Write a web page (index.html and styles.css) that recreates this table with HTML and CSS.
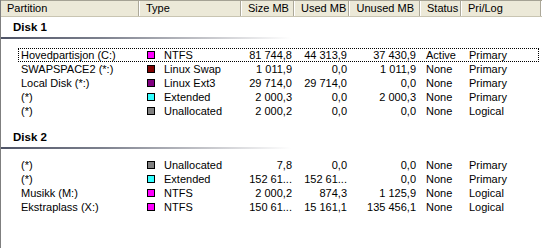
FILE: index.html
```html
<!DOCTYPE html>
<html>
<head>
<meta charset="utf-8">
<link rel="stylesheet" href="styles.css">
</head>
<body>
<div class="view">
  <div class="header">
    <div class="hc first">Partition</div>
    <div class="hc">Type</div>
    <div class="hc num">Size MB</div>
    <div class="hc num">Used MB</div>
    <div class="hc num">Unused MB</div>
    <div class="hc">Status</div>
    <div class="hc">Pri/Log</div>
    <div class="hc rest"></div>
  </div>

  <div class="group">
    <div class="gtitle">Disk 1</div>
    <div class="gline"></div>
    <div class="rows">
      <div class="row focus">
        <div class="c">Hovedpartisjon (C:)</div>
        <div class="c type"><span class="sw ntfs"></span>NTFS</div>
        <div class="c num">81 744,8</div>
        <div class="c num">44 313,9</div>
        <div class="c num u">37 430,9</div>
        <div class="c st">Active</div>
        <div class="c pl">Primary</div>
      </div>
      <div class="row">
        <div class="c">SWAPSPACE2 (*:)</div>
        <div class="c type"><span class="sw swap"></span>Linux Swap</div>
        <div class="c num">1 011,9</div>
        <div class="c num">0,0</div>
        <div class="c num u">1 011,9</div>
        <div class="c st">None</div>
        <div class="c pl">Primary</div>
      </div>
      <div class="row">
        <div class="c">Local Disk (*:)</div>
        <div class="c type"><span class="sw ext3"></span>Linux Ext3</div>
        <div class="c num">29 714,0</div>
        <div class="c num">29 714,0</div>
        <div class="c num u">0,0</div>
        <div class="c st">None</div>
        <div class="c pl">Primary</div>
      </div>
      <div class="row">
        <div class="c">(*)</div>
        <div class="c type"><span class="sw ext"></span>Extended</div>
        <div class="c num">2 000,3</div>
        <div class="c num">0,0</div>
        <div class="c num u">2 000,3</div>
        <div class="c st">None</div>
        <div class="c pl">Primary</div>
      </div>
      <div class="row">
        <div class="c">(*)</div>
        <div class="c type"><span class="sw unal"></span>Unallocated</div>
        <div class="c num">2 000,2</div>
        <div class="c num">0,0</div>
        <div class="c num u">0,0</div>
        <div class="c st">None</div>
        <div class="c pl">Logical</div>
      </div>
    </div>
  </div>

  <div class="group g2">
    <div class="gtitle">Disk 2</div>
    <div class="gline"></div>
    <div class="rows">
      <div class="row">
        <div class="c">(*)</div>
        <div class="c type"><span class="sw unal"></span>Unallocated</div>
        <div class="c num">7,8</div>
        <div class="c num">0,0</div>
        <div class="c num u">0,0</div>
        <div class="c st">None</div>
        <div class="c pl">Primary</div>
      </div>
      <div class="row">
        <div class="c">(*)</div>
        <div class="c type"><span class="sw ext"></span>Extended</div>
        <div class="c num">152 61...</div>
        <div class="c num">152 61...</div>
        <div class="c num u">0,0</div>
        <div class="c st">None</div>
        <div class="c pl">Primary</div>
      </div>
      <div class="row">
        <div class="c">Musikk (M:)</div>
        <div class="c type"><span class="sw ntfs"></span>NTFS</div>
        <div class="c num">2 000,2</div>
        <div class="c num">874,3</div>
        <div class="c num u">1 125,9</div>
        <div class="c st">None</div>
        <div class="c pl">Logical</div>
      </div>
      <div class="row">
        <div class="c">Ekstraplass (X:)</div>
        <div class="c type"><span class="sw ntfs"></span>NTFS</div>
        <div class="c num">150 61...</div>
        <div class="c num">15 161,1</div>
        <div class="c num u">135 456,1</div>
        <div class="c st">None</div>
        <div class="c pl">Logical</div>
      </div>
    </div>
  </div>
</div>
</body>
</html>
```

FILE: styles.css
```css
html, body {
  margin: 0;
  padding: 0;
  background: #fff;
}
body {
  font-family: "Liberation Sans", Arial, sans-serif;
  font-size: 11px;
  color: #000;
}
.view {
  width: 541px;
  height: 248px;
  border-left: 1px solid #7f7f7f;
  overflow: hidden;
}
.header {
  display: grid;
  grid-template-columns: 138px 102px 53px 55px 71px 41px 80px 1px;
  height: 17px;
  box-sizing: border-box;
  border-top: 1px solid #a5a294;
  border-bottom: 1px solid #c9c5b2;
  background: #ece9d8;
}
.hc {
  box-sizing: border-box;
  height: 15px;
  line-height: 15px;
  padding: 0 6px 0 7px;
  border-right: 1px solid #aca899;
  box-shadow: inset 1px 0 0 #fff;
  white-space: nowrap;
  overflow: hidden;
}
.hc.first { padding-left: 6px; box-shadow: none; }
.hc.num { text-align: right; padding-right: 5px; }
.hc.rest { border-right: none; padding: 0; }
.group {
  padding-top: 3px;
}
.g2 {
  padding-top: 12px;
}
.gtitle {
  font-weight: bold;
  height: 14px;
  line-height: 14px;
  padding-left: 12px;
  font-size: 11.5px;
}
.gline {
  margin-top: 3px;
  width: 290px;
  height: 2px;
  background: linear-gradient(to right, #4e5366 0%, #7d818e 35%, #c3c4c9 70%, rgba(255,255,255,0) 100%);
}
.rows {
  margin: 9px 0 0 17px;
  width: 521px;
}
.row {
  display: grid;
  grid-template-columns: 122px 102px 53px 55px 71px 41px 77px;
  height: 14px;
  box-sizing: border-box;
  border: 1px solid transparent;
  line-height: 12px;
}
.row.focus {
  border: 1px dotted #000;
}
.c {
  box-sizing: border-box;
  white-space: nowrap;
  overflow: hidden;
  padding-left: 2px;
}
.c.type {
  padding-left: 6px;
  display: flex;
  align-items: center;
}
.c.num {
  text-align: right;
  padding-right: 4px;
}
.c.num.u { padding-right: 6px; }
.c.st { padding-left: 4px; }
.c.pl { padding-left: 6px; }
.sw {
  display: inline-block;
  width: 8px;
  height: 8px;
  box-sizing: border-box;
  border: 1px solid #000;
  margin-right: 9px;
  flex: none;
}
.ntfs { background: #ff00ff; }
.swap { background: #800000; }
.ext3 { background: #800080; }
.ext  { background: #33ffff; }
.unal { background: #808080; }
```
